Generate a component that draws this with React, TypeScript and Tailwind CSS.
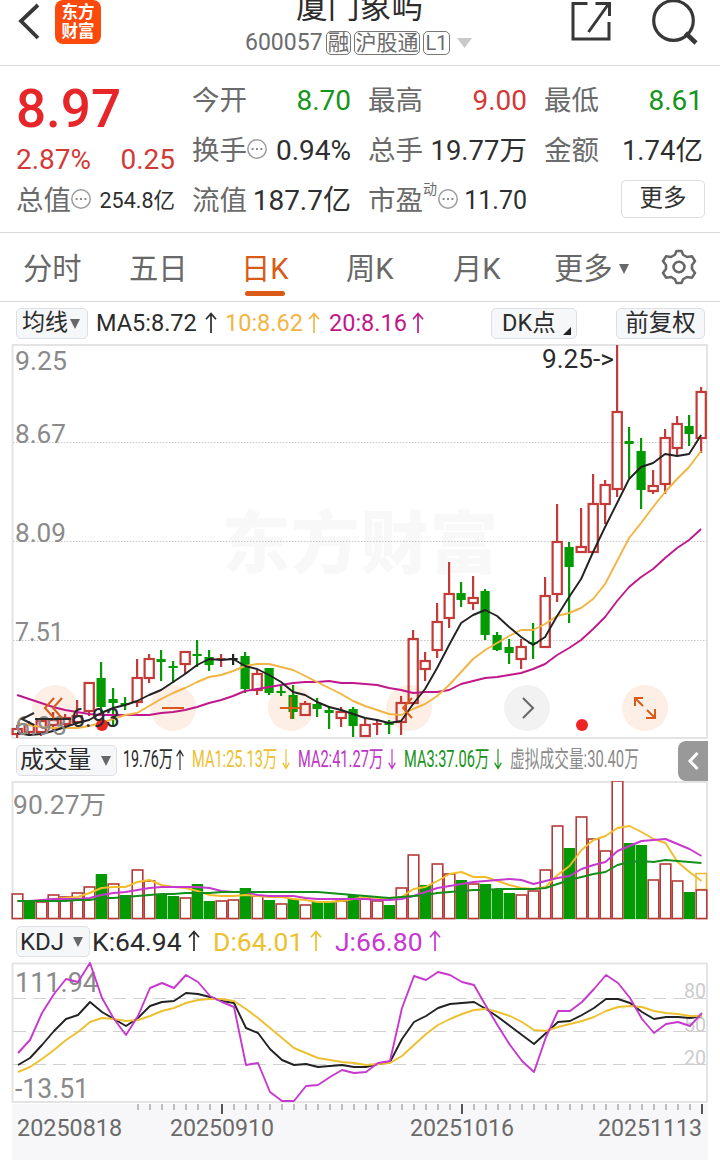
import type { ReactNode } from "react";

type Candle = [c: "r" | "g" | "k", high: number, top: number, bottom: number, low: number];

const RED = "#c23b38";
const GREEN = "#039a03";
const px = (i: number) => 18 + i * 12;
const toLine = (v: number[]) => v.map((y, i) => `${px(i)},${y}`).join(" ");

const candles: Candle[] = [
  ["r", 725, 729, 734, 738], ["r", 721, 725, 732, 735], ["r", 718, 721, 732, 736], ["r", 712, 720, 725, 730],
  ["r", 714, 718, 724, 727], ["r", 700, 716, 722, 724], ["r", 683, 683, 711, 716], ["g", 662, 678, 707, 712],
  ["g", 688, 699, 703, 726], ["g", 697, 703, 705, 710], ["r", 659, 678, 702, 707], ["r", 654, 659, 678, 683],
  ["g", 650, 659, 662, 681], ["g", 661, 666, 668, 683], ["r", 652, 652, 664, 674], ["g", 640, 654, 656, 667],
  ["g", 650, 657, 665, 671], ["r", 654, 658, 660, 667], ["k", 654, 658, 660, 665], ["g", 652, 656, 689, 693],
  ["r", 670, 674, 690, 695], ["g", 668, 668, 693, 695], ["g", 685, 691, 693, 696], ["g", 685, 695, 712, 719],
  ["r", 701, 704, 715, 716], ["g", 698, 704, 709, 717], ["g", 706, 710, 713, 729], ["r", 707, 712, 718, 727],
  ["g", 707, 709, 726, 737], ["r", 718, 725, 736, 736], ["r", 719, 723, 725, 735], ["g", 720, 722, 725, 734],
  ["r", 696, 703, 722, 735], ["r", 630, 639, 703, 705], ["r", 652, 661, 669, 681], ["r", 603, 622, 650, 658],
  ["r", 562, 594, 618, 628], ["g", 582, 593, 600, 607], ["r", 576, 598, 603, 610], ["g", 589, 591, 635, 640],
  ["g", 632, 635, 650, 651], ["g", 639, 647, 653, 664], ["r", 639, 647, 659, 669], ["g", 623, 642, 644, 659],
  ["r", 577, 596, 647, 647], ["r", 504, 542, 594, 602], ["g", 542, 547, 567, 623], ["r", 508, 547, 552, 552],
  ["r", 474, 504, 552, 552], ["r", 480, 485, 504, 524], ["r", 345, 412, 489, 497], ["g", 427, 441, 444, 478],
  ["g", 438, 451, 490, 509], ["r", 470, 486, 491, 494], ["r", 429, 438, 484, 494], ["r", 416, 424, 448, 455],
  ["g", 415, 426, 434, 446], ["r", 387, 392, 438, 453],
];

const ma5 = [
  733, 735, 734, 731, 727, 723, 720, 713, 708, 705, 701, 695, 690, 682, 674, 665, 659, 660, 659, 666, 669, 675, 682,
  692, 695, 702, 707, 710, 714, 718, 720, 723, 721, 704, 689, 668, 645, 623, 615, 610, 616, 627, 637, 645, 637, 616,
  597, 579, 552, 527, 503, 479, 467, 463, 454, 456, 454, 435,
];
const ma10 = [
  723, 725, 727, 728, 728, 728, 726, 723, 719, 715, 713, 706, 699, 693, 688, 682, 677, 675, 671, 666, 664, 664, 667,
  670, 676, 682, 688, 694, 701, 706, 710, 714, 715, 709, 704, 696, 685, 672, 659, 650, 643, 636, 630, 630, 624, 616,
  613, 608, 599, 584, 561, 538, 523, 507, 492, 479, 467, 451,
];
const ma20 = [
  695, 699, 703, 707, 710, 712, 714, 715, 715, 715, 715, 715, 713, 712, 710, 707, 703, 700, 696, 691, 689, 687, 685,
  683, 682, 682, 681, 683, 683, 684, 685, 688, 690, 693, 692, 692, 690, 684, 681, 678, 677, 675, 673, 669, 664, 655,
  648, 640, 629, 617, 601, 587, 577, 569, 558, 548, 540, 529,
];

const volTop = [
  894, 902, 902, 895, 897, 893, 887, 874, 884, 895, 870, 881, 895, 896, 898, 884, 901, 901, 900, 888, 896, 900, 904,
  899, 905, 902, 902, 901, 895, 898, 901, 905, 888, 855, 885, 864, 874, 880, 884, 884, 889, 893, 895, 891, 870, 826,
  848, 817, 839, 851, 781, 843, 845, 880, 864, 881, 892, 890,
];
const volUp = "rgrrrrrgrgrrggrggrrgrgrgrggrgrrgrrgrrgrgggrrrrgrrrrggrrrgr";

const vol5 = [
  901, 901, 901, 899, 898, 897, 893, 888, 887, 887, 882, 880, 885, 887, 888, 891, 895, 896, 896, 895, 896, 897, 897,
  899, 900, 902, 902, 901, 899, 897, 898, 898, 897, 889, 887, 881, 874, 872, 877, 877, 881, 885, 888, 889, 887, 875,
  866, 850, 840, 836, 828, 826, 832, 839, 843, 862, 872, 881,
];
const vol10 = [
  901, 901, 900, 899, 899, 899, 898, 895, 893, 892, 890, 888, 887, 887, 887, 887, 888, 891, 892, 892, 895, 896, 896,
  896, 898, 899, 899, 899, 899, 899, 900, 900, 899, 896, 892, 888, 886, 884, 882, 881, 880, 879, 880, 884, 881, 878,
  876, 869, 865, 862, 851, 846, 841, 840, 839, 844, 849, 856,
];
const vol20 = [
  901, 901, 901, 901, 901, 900, 900, 898, 898, 897, 896, 895, 894, 894, 893, 893, 893, 892, 892, 892, 892, 892, 892,
  892, 892, 892, 893, 894, 895, 896, 897, 898, 897, 896, 895, 893, 892, 891, 890, 890, 889, 889, 889, 889, 888, 884,
  880, 877, 874, 872, 865, 862, 861, 862, 860, 861, 862, 863,
];

const kLine = [
  1065, 1058, 1045, 1031, 1019, 1015, 1002, 1012, 1019, 1026, 1018, 1006, 1002, 1001, 993, 994, 997, 1001, 1003, 1028,
  1033, 1049, 1060, 1065, 1064, 1067, 1066, 1065, 1067, 1067, 1064, 1062, 1039, 1022, 1016, 1008, 1004, 1003, 1002,
  1009, 1017, 1026, 1035, 1044, 1033, 1022, 1021, 1015, 1008, 999, 999, 1003, 1012, 1019, 1017, 1017, 1018, 1016,
];
const dLine = [
  1072, 1067, 1059, 1050, 1040, 1032, 1022, 1018, 1019, 1021, 1020, 1016, 1011, 1008, 1003, 1000, 999, 999, 1001,
  1009, 1018, 1028, 1038, 1048, 1053, 1058, 1060, 1062, 1063, 1065, 1064, 1063, 1056, 1045, 1034, 1025, 1019, 1014,
  1010, 1009, 1012, 1016, 1022, 1030, 1031, 1027, 1024, 1021, 1017, 1011, 1007, 1006, 1007, 1011, 1013, 1014, 1016,
  1016,
];
const jLine = [
  1053, 1040, 1013, 994, 979, 982, 963, 998, 1019, 1035, 1016, 988, 983, 988, 975, 982, 996, 1002, 1007, 1065, 1063,
  1092, 1101, 1101, 1086, 1085, 1077, 1070, 1073, 1072, 1063, 1061, 1008, 976, 980, 972, 975, 982, 985, 1006, 1026,
  1045, 1061, 1072, 1037, 1011, 1011, 1002, 989, 975, 983, 998, 1019, 1033, 1024, 1022, 1026, 1013,
];

function Line({ data, color }: { data: number[]; color: string }) {
  return <polyline points={toLine(data)} fill="none" stroke={color} strokeWidth="1.9" strokeLinejoin="round" />;
}

function Label({ x, y, w, size = 26, fill = "#8a8a8a", children }: {
  x: number; y: number; w: number; size?: number; fill?: string; children: string;
}) {
  return (
    <text x={x} y={y} fontSize={size} fill={fill} textLength={w} lengthAdjust="spacingAndGlyphs">
      {children}
    </text>
  );
}

function Arrow({ down = false, narrow = false }: { down?: boolean; narrow?: boolean }) {
  return (
    <svg className={`${narrow ? "w-2" : "w-3"} mb-[3px] h-[21px] shrink-0 ${down ? "rotate-180" : ""}`} viewBox="0 0 12 22" preserveAspectRatio="none" fill="none" stroke="currentColor" strokeWidth="1.7">
      <path d="M6 22V1.5M1 7.5L6 1.5l5 6" />
    </svg>
  );
}

function Caret({ className }: { className: string }) {
  return (
    <svg className={className} viewBox="0 0 10 8" preserveAspectRatio="none" fill="currentColor">
      <path d="M0 0h10L5 8z" />
    </svg>
  );
}

function Dots() {
  return (
    <svg className="-ml-px mb-1 size-[22px] shrink-0" viewBox="0 0 22 22">
      <circle cx="11" cy="11" r="9.2" fill="none" stroke="#9c9c9c" strokeWidth="1.5" />
      <path d="M5.6 11h2M10 11h2M14.4 11h2" stroke="#8b8b8b" strokeWidth="2" />
    </svg>
  );
}

function Stat({ label, value, tone = "text-[#2f2f2f]", dots = false, sup, size = "text-[28px]" }: {
  label: string; value: string; tone?: string; dots?: boolean; sup?: string; size?: string;
}) {
  return (
    <div className="flex h-[50px] items-center pt-[2px] whitespace-nowrap">
      <span className="-ml-px text-[27.5px] text-[#6a6a6a]">{label}</span>
      {sup && <span className="mb-6 w-[15px] text-[14px] text-[#6a6a6a]">{sup}</span>}
      {dots && <Dots />}
      <span className={`ml-auto ${size} ${tone}`}>{value}</span>
    </div>
  );
}

function Tab({ width, active = false, children }: { width: string; active?: boolean; children: ReactNode }) {
  return (
    <div className={`${width} flex h-full items-start pt-[15px] text-[29.3px] leading-[42px] ${active ? "text-[#d95b17]" : "text-[#686868]"}`}>
      <div className="relative -ml-px flex items-center whitespace-nowrap">
        {children}
        {active && <span className="absolute top-[43px] left-[4px] h-[4.5px] w-10 rounded-full bg-[#d95b17]" />}
      </div>
    </div>
  );
}

const box = "flex shrink-0 items-center rounded-[5px] border border-[#dedfe2] bg-[#f6f7f9] whitespace-nowrap text-[#2b2b2b]";

function Narrow({ width, scale, children }: { width: string; scale: string; children: string }) {
  return (
    <span className={`${width} shrink-0`}>
      <span className={`inline-block origin-left whitespace-nowrap text-[23px] ${scale}`}>{children}</span>
    </span>
  );
}

export default function App() {
  return (
    <div className="flex h-[1168px] w-[720px] flex-col overflow-hidden bg-white font-['Roboto','Noto_Sans_CJK_SC',sans-serif]">
      <header className="flex h-[66px] shrink-0 border-b border-[#d9d9d9]">
        <svg className="ml-4 h-12 w-6 shrink-0" viewBox="0 0 24 48" fill="none" stroke="#383838">
          <path d="M22 5L5 21l17 17" strokeWidth="3.8" />
        </svg>
        <div className="ml-[15px] flex h-[44px] w-[46px] shrink-0 flex-col items-center justify-center rounded-b-[8px] rounded-t-[8px] bg-[#fb4a0c] text-[16.5px] leading-[19px] font-bold text-white">
          <span>东方</span>
          <span>财富</span>
        </div>
        <div className="flex w-[470px] shrink-0 flex-col pl-[144px]">
          <h1 className="-mt-[15px] h-[45px] pl-[51px] text-[31.8px] leading-[44px] text-[#2c2c2c]">厦门象屿</h1>
          <div className="flex items-center whitespace-nowrap text-[23px] leading-[26px] text-[#6c6c6c]">
            <span className="w-[81px]">600057</span>
            <span className="mr-[3px] flex h-6 w-[25px] items-center justify-center rounded-[5px] border-[1.5px] border-[#777] text-[21.5px]">融</span>
            <span className="mr-[3px] flex h-6 w-[66px] items-center justify-center rounded-[5px] border-[1.5px] border-[#777] text-[21px]">沪股通</span>
            <span className="mr-[7px] flex h-6 w-[27px] items-center justify-center rounded-[5px] border-[1.5px] border-[#777] text-[20px]">L1</span>
            <Caret className="h-[10px] w-[15px] text-[#c9c9c9]" />
          </div>
        </div>
        <svg className="h-[60px] w-[44px] shrink-0" viewBox="571.500 0 44 60" fill="none" stroke="#383838" strokeWidth="3">
          <path d="M588 3.5h-14.5v35.5h36V22M589 32L609 4M596 3.5h14V16" />
        </svg>
        <svg className="ml-9 h-[60px] w-[52px] shrink-0" viewBox="652 0 52 60" fill="none" stroke="#383838" strokeWidth="3.200">
          <circle cx="674.500" cy="20.500" r="19.800" />
          <path d="M686.500 33l10.500 10" strokeWidth="4.500" />
        </svg>
      </header>

      <section className="grid h-[167px] shrink-0 grid-cols-[158px_158px_158px_158px] gap-x-[18px] border-b border-[#d9d9d9] px-[17px] pt-[9px]">
        <div>
          <div className="-ml-px h-[67px] text-[53px] leading-[69px] font-medium text-[#e62629]">8.97</div>
          <div className="-ml-px flex h-[33px] items-center justify-between pt-[2px] text-[28px] text-[#d23a38]">
            <span>2.87%</span>
            <span>0.25</span>
          </div>
          <Stat label="总值" value="254.8亿" dots size="text-[21.5px]" />
        </div>
        <div>
          <Stat label="今开" value="8.70" tone="text-[#16931a]" />
          <Stat label="换手" value="0.94%" dots />
          <Stat label="流值" value="187.7亿" />
        </div>
        <div>
          <Stat label="最高" value="9.00" tone="text-[#d23a38]" />
          <Stat label="总手" value="19.77万" size="text-[27.5px]" />
          <Stat label="市盈" value="11.70" sup="动" dots size="text-[25px]" />
        </div>
        <div>
          <Stat label="最低" value="8.61" tone="text-[#16931a]" />
          <Stat label="金额" value="1.74亿" size="text-[27.5px]" />
          <button className="mt-[5px] -mr-[2px] ml-auto flex h-[38px] w-[84px] items-center justify-center rounded-[5px] border border-[#dedede] text-[23.5px] text-[#333]">更多</button>
        </div>
      </section>

      <nav className="flex h-[69px] shrink-0 border-b border-[#d9d9d9] pl-6">
        <Tab width="w-[106px]">分时</Tab>
        <Tab width="w-[112px]">五日</Tab>
        <Tab width="w-[105px]" active>日K</Tab>
        <Tab width="w-[107px]">周K</Tab>
        <Tab width="w-[101px]">月K</Tab>
        <Tab width="w-[106px]">
          更多<Caret className="ml-[6px] h-[10px] w-[10px]" />
        </Tab>
        <svg className="mt-4 size-9 shrink-0" viewBox="0 0 36 38" preserveAspectRatio="none" fill="none" stroke="#686868" strokeWidth="2.600" strokeLinejoin="round">
          <path d="M14 6L15.500 2h5L22 6l4 2.400 5-.7 3 5-3 4.300v4L34 25.300l-3 5-5-.7-4 2.400L20.500 36h-5L14 32l-4-2.400-5 .7-3-5L5 21v-4l-3-4.300 3-5 5 .7z" />
          <circle cx="18" cy="19" r="5.500" />
        </svg>
      </nav>

      <div className="flex h-[42px] shrink-0 items-center pt-px pl-4 text-[23.5px]">
        <div className={`${box} mr-2 h-[31px] w-[72px] gap-[2px] pl-[5px] text-[23px]`}>
          均线<Caret className="h-[10px] w-[10px] text-[#686868]" />
        </div>
        <span className="flex w-[129px] shrink-0 items-center gap-2 text-[#2b2b2b]">MA5:8.72<Arrow /></span>
        <span className="flex w-[104px] shrink-0 items-center gap-[5px] text-[#f2b544]">10:8.62<Arrow /></span>
        <span className="flex w-[162px] shrink-0 items-center gap-[5px] text-[#c0188a]">20:8.16<Arrow /></span>
        <div className={`${box} mr-[39px] h-[31px] w-[86px] pl-[10px]`}>
          DK点
          <svg className="mt-[14px] ml-[7px] size-2" viewBox="0 0 8 8"><path d="M8 0v8H0z" fill="#222" /></svg>
        </div>
        <div className={`${box} h-[31px] w-[89px] justify-center`}>前复权</div>
      </div>

      <svg className="h-[396px] w-[720px] shrink-0" viewBox="0 344 720 396">
        <rect x="12.500" y="345" width="694.500" height="393" fill="none" stroke="#e2e2e2" strokeWidth="1.800" />
        <text x="222" y="568" fontSize="68" fontWeight="900" fill="#f8f8f8" textLength="276">东方财富</text>
        {[442.5, 541.5, 640.5].map((y) => (
          <line key={y} x1="13" x2="707" y1={y} y2={y} stroke="#c9c9c9" strokeDasharray="1.500 1.500" />
        ))}
        <Label x={15} y={370} w={52}>9.25</Label>
        <Label x={15} y={443} w={51}>8.67</Label>
        <Label x={15} y={542} w={51}>8.09</Label>
        <Label x={15} y={641} w={49}>7.51</Label>
        {[55, 173, 291, 409].map((x) => (
          <circle key={x} cx={x} cy="708" r="23" fill="#fdeee6" />
        ))}
        <circle cx="527" cy="708" r="23" fill="#f2f2f2" />
        <circle cx="645" cy="708" r="23" fill="#fdeee6" />
        <g transform="translate(-0.9 0)">
          {candles.map(([c, high, top, bottom, low], i) => {
            const color = c === "r" ? RED : c === "g" ? GREEN : "#222";
            const flat = bottom - top <= 3;
            return (
              <g key={i} stroke={color} strokeWidth="2.200">
                <path d={`M${px(i)} ${high}V${top}M${px(i)} ${bottom}V${low}`} />
                {flat || c === "g" ? (
                  <>
                    {flat && <path d={`M${px(i)} ${top}V${bottom}`} />}
                    <rect x={px(i) - 4.6} y={top} width="9.200" height={bottom - top} fill={color} stroke="none" />
                  </>
                ) : (
                  <rect x={px(i) - 4.5} y={top} width="9.200" height={bottom - top} fill="none" />
                )}
              </g>
            );
          })}
          <Line data={ma20} color="#c0188a" />
          <Line data={ma10} color="#f2b544" />
          <Line data={ma5} color="#222" />
        </g>
        <Label x={542} y={368} w={72} fill="#2b2b2b">9.25-&gt;</Label>
        <circle cx="102" cy="725" r="6" fill="#ee2424" />
        <circle cx="582" cy="725" r="6" fill="#ee2424" />
        <Label x={15} y={735} w={52}>6.93</Label>
        <path d="M34 713L22 719l12 6M35 719H71" fill="none" stroke="#2b2b2b" strokeWidth="2" />
        <Label x={71} y={727} w={49} fill="#2b2b2b">6.93</Label>
        <g fill="none" stroke="#d95b17" strokeWidth="2">
          <path d="M54 698L45 708l9 10M62 698L53 708l9 10M162 708h22M280 708h22M291 697v22M412 698L403 708l9 10" />
          <path d="M635 706V698h8M635 698l8 8M655 709v9h-9M655 718l-8-8" />
        </g>
        <path d="M523 698l10 10-10 10" fill="none" stroke="#666" strokeWidth="2" />
      </svg>

      <div className="flex h-[41px] shrink-0 items-center pl-4">
        <div className={`${box} mr-[6px] h-[31px] w-[101px] gap-[10px] pl-[3px] text-[23.8px]`}>
          成交量<Caret className="h-[10px] w-[10px] text-[#686868]" />
        </div>
        <span className="flex w-[69px] shrink-0 items-center text-[#2b2b2b]"><Narrow width="w-[53px]" scale="scale-x-[0.62]">19.76万</Narrow><Arrow narrow /></span>
        <span className="flex w-[106px] shrink-0 items-center text-[#edc02f]"><Narrow width="w-[90px]" scale="scale-x-[0.635]">MA1:25.13万</Narrow><Arrow down narrow /></span>
        <span className="flex w-[106px] shrink-0 items-center text-[#bd35c6]"><Narrow width="w-[90px]" scale="scale-x-[0.635]">MA2:41.27万</Narrow><Arrow down narrow /></span>
        <span className="flex w-[106px] shrink-0 items-center text-[#16931a]"><Narrow width="w-[90px]" scale="scale-x-[0.635]">MA3:37.06万</Narrow><Arrow down narrow /></span>
        <span className="text-[#8a8a8a]"><Narrow width="inline-block w-[168px]" scale="scale-x-[0.64]">虚拟成交量:30.40万</Narrow></span>
        <div className="flex h-[40px] w-[30px] shrink-0 items-center justify-center rounded-l-[8px] bg-[#999]">
          <svg className="h-5 w-3" viewBox="0 0 12 20" fill="none" stroke="white" strokeWidth="3"><path d="M10.500 2L3 10l7.500 8" /></svg>
        </div>
      </div>

      <svg className="h-[140px] w-[720px] shrink-0" viewBox="0 781 720 140">
        <rect x="12.500" y="782" width="694.500" height="137" fill="none" stroke="#e2e2e2" strokeWidth="1.800" />
        <Label x={13} y={814} w={93}>90.27万</Label>
        <g transform="translate(-0.5 0)">
          <rect x="696.500" y="873.500" width="10.500" height="16" fill="none" stroke="#edb62f" strokeWidth="1.500" />
          {volTop.map((y, i) =>
            volUp[i] === "g" ? (
              <rect key={i} x={px(i) - 5.8} y={y} width="11.400" height={919 - y} fill={GREEN} />
            ) : (
              <rect key={i} x={px(i) - 5.3} y={y} width="10.600" height={918.5 - y} fill="#fff" stroke="#b53a38" strokeWidth="1.600" />
            )
          )}
          <Line data={vol5} color="#f2bd2b" />
          <Line data={vol10} color="#c738cf" />
          <Line data={vol20} color="#138f1c" />
        </g>
      </svg>

      <div className="flex h-[41px] shrink-0 items-center pl-4 text-[26.5px]">
        <div className={`${box} mr-[2px] h-[31px] w-[74px] gap-[9px] pl-[3px] text-[24px]`}>
          KDJ<Caret className="h-[10px] w-[10px] text-[#686868]" />
        </div>
        <span className="flex w-[121px] shrink-0 items-center gap-[6px] text-[#2b2b2b]">K:64.94<Arrow /></span>
        <span className="flex w-[122px] shrink-0 items-center gap-[7px] text-[#edc02f]">D:64.01<Arrow /></span>
        <span className="flex shrink-0 items-center gap-[6px] text-[#c738cf]">J:66.80<Arrow /></span>
      </div>

      <svg className="h-[142px] w-[720px] shrink-0" viewBox="0 962 720 142">
        <rect x="12.500" y="963.500" width="694.500" height="138.500" fill="none" stroke="#e2e2e2" strokeWidth="1.800" />
        {[998.5, 1031.5, 1064.5].map((y) => (
          <line key={y} x1="13" x2="707" y1={y} y2={y} stroke="#d0d0d0" strokeWidth="1.200" strokeDasharray="13 7" />
        ))}
        <Label x={684} y={998} w={22} size={20} fill="#ccc">80</Label>
        <Label x={684} y={1032} w={22} size={20} fill="#ccc">50</Label>
        <Label x={684} y={1065} w={22} size={20} fill="#ccc">20</Label>
        <Label x={15} y={992} w={83} size={27}>111.94</Label>
        <Label x={15} y={1098} w={74} size={27}>-13.51</Label>
        <Line data={kLine} color="#222" />
        <Line data={dLine} color="#edc02f" />
        <Line data={jLine} color="#c738cf" />
      </svg>

      <svg className="h-[56px] w-[720px] shrink-0" viewBox="0 1104 720 56">
        <rect x="12" y="1104" width="696" height="56" fill="#f7f7f9" />
        {Array.from({ length: 48 }, (_, k) => k + 10).map((i) => {
          const major = i === 17 || i === 37 || i === 57;
          return <path key={i} d={`M${px(i)} 1104v${major ? 10 : 6}`} stroke={major ? "#555" : "#aaa"} strokeWidth={major ? 2 : 1.5} />;
        })}
        <Label x={17} y={1136} w={105} size={24} fill="#6a6a6a">20250818</Label>
        <Label x={170} y={1136} w={104} size={24} fill="#6a6a6a">20250910</Label>
        <Label x={410} y={1136} w={104} size={24} fill="#6a6a6a">20251016</Label>
        <Label x={598} y={1136} w={104} size={24} fill="#6a6a6a">20251113</Label>
      </svg>
    </div>
  );
}
